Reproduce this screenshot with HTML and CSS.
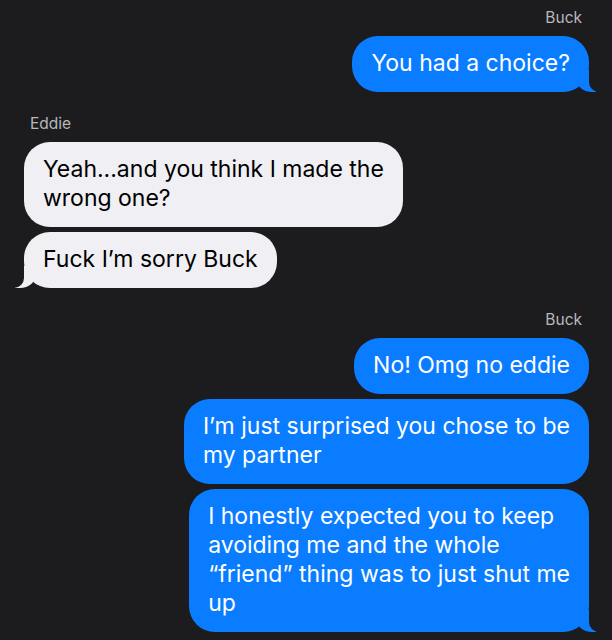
FILE: index.html
```html
<!DOCTYPE html>
<html lang="en">
<head>
    <meta charset="UTF-8">
    <meta name="viewport" content="width=device-width, initial-scale=1.0">
    <title>Messages</title>
    <link rel="stylesheet" href="styles.css">
</head>
<body>
    <div class="chat">
        <!-- Buck -->
        <div class="group sent">
            <div class="name">Buck</div>
            <div class="bubble tail">You had a choice?</div>
        </div>

        <!-- Eddie -->
        <div class="group received">
            <div class="name">Eddie</div>
            <div class="bubble">Yeah...and you think I made the<br>wrong one?</div>
            <div class="bubble tail">Fuck I’m sorry Buck</div>
        </div>

        <!-- Buck -->
        <div class="group sent">
            <div class="name">Buck</div>
            <div class="bubble">No! Omg no eddie</div>
            <div class="bubble">I’m just surprised you chose to be<br>my partner</div>
            <div class="bubble tail">I honestly expected you to keep<br>avoiding me and the whole<br>“friend” thing was to just shut me<br>up</div>
        </div>
    </div>
</body>
</html>
```

FILE: styles.css
```css
/* base */
body {
    margin: 0;
    padding: 0;
    background-color: #1c1c1e;
    font-family: Inter, "Noto Sans", Arial, sans-serif;
}

.chat {
    display: flex;
    flex-direction: column;
    gap: 23px;
    padding: 9px 23px 0 24px;
}

.group {
    display: flex;
    flex-direction: column;
    gap: 5px;
}

.sent {
    align-items: flex-end;
}

.received {
    align-items: flex-start;
}

.name {
    font-size: 15.5px;
    line-height: 18px;
    color: #b8b8bd;
    margin-bottom: 4px;
    padding: 0 7px 0 6px;
}

.bubble {
    position: relative;
    max-width: 380px;
    padding: 13px 19px 14px;
    border-radius: 26px;
    font-size: 23px;
    line-height: 29px;
}

.sent .bubble {
    background-color: #0a7cff;
    color: #fff;
}

.received .bubble {
    background-color: #efeff4;
    color: #000;
}

/* message tail */
.bubble.tail::before,
.bubble.tail::after {
    content: "";
    position: absolute;
    bottom: 0;
    height: 22px;
}

.sent .bubble.tail::before {
    right: -7px;
    width: 20px;
    background-color: #0a7cff;
    border-bottom-left-radius: 16px 14px;
}

.sent .bubble.tail::after {
    right: -10px;
    width: 10px;
    background-color: #1c1c1e;
    border-bottom-left-radius: 10px;
}

.received .bubble.tail::before {
    left: -9px;
    width: 21px;
    background-color: #efeff4;
    border-bottom-right-radius: 16px 14px;
}

.received .bubble.tail::after {
    left: -10px;
    width: 10px;
    background-color: #1c1c1e;
    border-bottom-right-radius: 10px;
}
```
